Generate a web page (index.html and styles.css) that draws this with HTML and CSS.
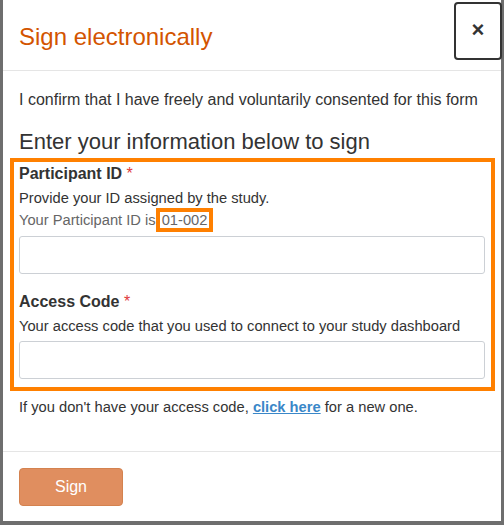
FILE: index.html
```html
<!DOCTYPE html>
<html>
<head>
<meta charset="utf-8">
<link rel="stylesheet" href="styles.css">
</head>
<body>
<div class="modal">
  <div class="modal-header">
    <h4 class="modal-title">Sign electronically</h4>
    <button class="close" type="button">×</button>
  </div>
  <div class="modal-body">
    <p class="confirm">I confirm that I have freely and voluntarily consented for this form</p>
    <h3 class="subtitle">Enter your information below to sign</h3>
    <div class="highlight">
      <div class="field">
        <label class="label">Participant ID <span class="req">*</span></label>
        <div class="help first-help">Provide your ID assigned by the study.</div>
        <div class="help muted">Your Participant ID is <span class="pid">01-002</span></div>
        <input class="input" type="text">
      </div>
      <div class="field second">
        <label class="label">Access Code <span class="req">*</span></label>
        <div class="help">Your access code that you used to connect to your study dashboard</div>
        <input class="input" type="text">
      </div>
    </div>
    <p class="note">If you don't have your access code, <a class="link" href="#">click here</a> for a new one.</p>
  </div>
  <div class="modal-footer">
    <button class="btn-sign" type="button">Sign</button>
  </div>
</div>
</body>
</html>
```
FILE: styles.css
```css
html, body {
  margin: 0;
  padding: 0;
}
body {
  background: #6e6e6e;
  width: 504px;
  height: 525px;
  overflow: hidden;
  font-family: "Liberation Sans", Arial, sans-serif;
  color: #333;
}
.modal {
  margin: 0 3px;
  width: 498px;
  height: 521px;
  background: #fff;
  box-sizing: border-box;
  display: flex;
  flex-direction: column;
}
.modal-header {
  position: relative;
  padding: 20px 16px 16px;
  border-bottom: 1px solid #e5e5e5;
}
.modal-title {
  margin: 0;
  font-size: 24px;
  line-height: 34px;
  font-weight: 400;
  color: #d35400;
}
.close {
  position: absolute;
  top: 2px;
  right: -1px;
  width: 48px;
  height: 58px;
  border: 2px solid #333;
  border-radius: 4px;
  background: #fff;
  font-family: "Liberation Sans", Arial, sans-serif;
  font-size: 22px;
  font-weight: 700;
  color: #333;
  padding: 0 0 2px;
  line-height: 1;
}
.modal-body {
  padding: 18px 16px 0;
  height: 380px;
  box-sizing: border-box;
}
.confirm {
  margin: 0;
  font-size: 16px;
  line-height: 22px;
}
.subtitle {
  margin: 16px 0 1px;
  font-size: 22px;
  line-height: 30px;
  font-weight: 400;
}
.highlight {
  margin: 0 -10px 0 -9px;
  border: 4px solid #ff8000;
  padding: 1px 6px 8px 5px;
}
.label {
  display: block;
  font-size: 16px;
  font-weight: 700;
  line-height: 22px;
}
.req {
  color: #e03a3a;
  font-weight: 400;
}
.help {
  font-size: 14.7px;
  line-height: 22px;
}
.first-help {
  margin-top: 2px;
}
.muted {
  color: #666;
}
.pid {
  border: 4px solid #ff8000;
  padding: 0 2px;
  margin-left: -4px;
}
.input {
  display: block;
  box-sizing: border-box;
  width: 100%;
  height: 38px;
  margin: 5px 0 0;
  border: 1px solid #ccd0d5;
  border-radius: 3px;
  background: #fff;
}
.second {
  margin-top: 17px;
}
.second .help {
  margin-top: 2px;
}
.second .input {
  margin-top: 4px;
}
.note {
  margin: 5px 0 0;
  font-size: 14.7px;
  line-height: 22px;
}
.link {
  color: #3a87c8;
  font-weight: 700;
  text-decoration: underline;
}
.modal-footer {
  border-top: 1px solid #e5e5e5;
  padding: 16px 16px 15px;
}
.btn-sign {
  width: 104px;
  height: 38px;
  background: #e08e5f;
  border: 1px solid #d4824f;
  border-radius: 4px;
  color: #fff;
  font-family: "Liberation Sans", Arial, sans-serif;
  font-size: 16px;
  padding: 0;
}
```
